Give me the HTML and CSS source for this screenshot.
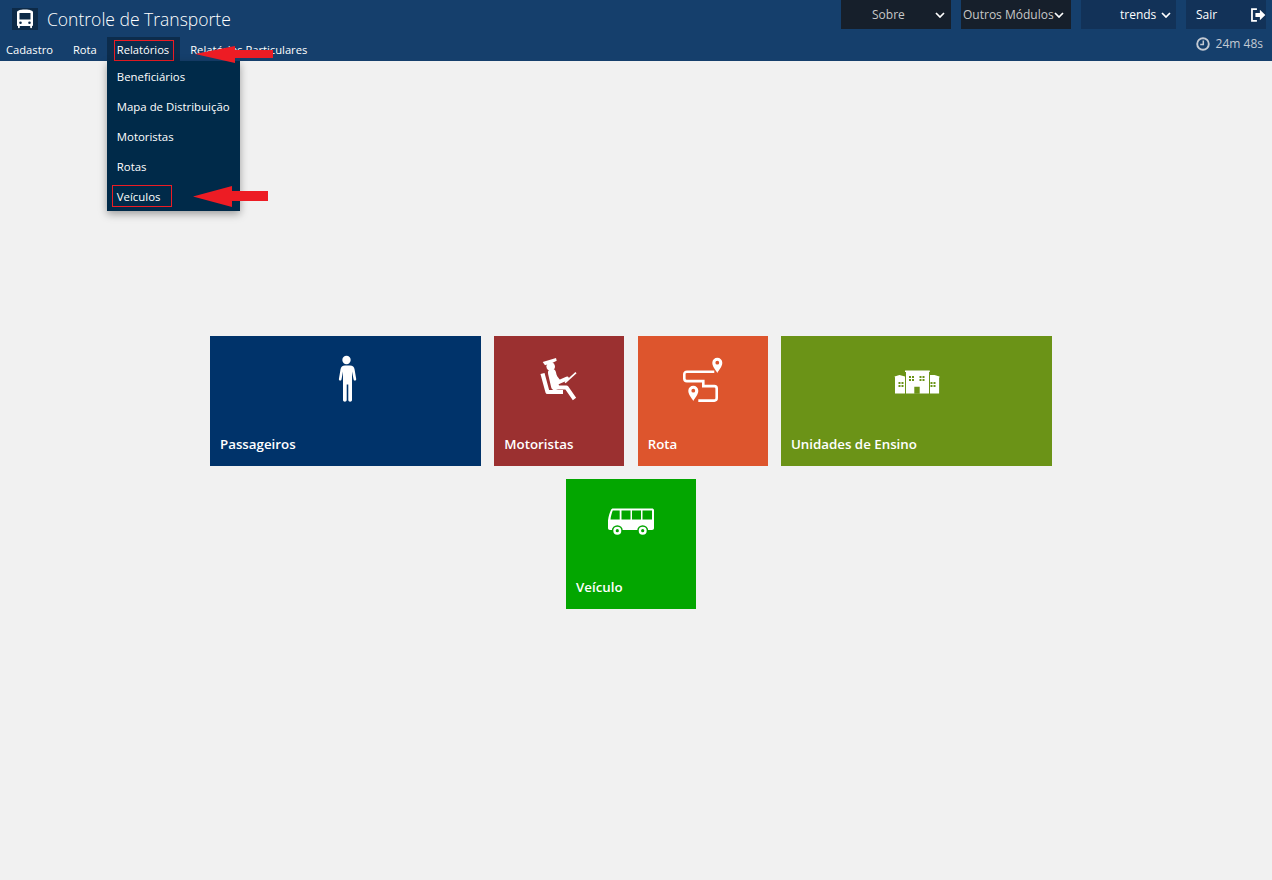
FILE: index.html
```html
<!DOCTYPE html>
<html lang="pt-BR">
<head>
<meta charset="utf-8">
<title>Controle de Transporte</title>
<link rel="stylesheet" href="styles.css">
</head>
<body>
<header class="header">
  <div class="top">
    <div class="brand">
      <span class="logo">
        <svg width="26" height="22" viewBox="0 0 26 22"><path fill="#fff" d="M7 2.500C7 2 10 1.500 13 1.500S19 2 19 2.500c1.500.3 2 1 2 2V17c0 .6-.4 1-1 1v1.500c0 1-1.800 1-1.800 0V18H7.800v1.500c0 1-1.800 1-1.800 0V18c-.6 0-1-.4-1-1V4.500c0-1 .5-1.700 2-2zM7.500 5v6.500h11V5zM8.500 13.500a1.300 1.300 0 1 0 0 2.600 1.300 1.300 0 0 0 0-2.600zm9 0a1.300 1.300 0 1 0 0 2.600 1.300 1.300 0 0 0 0-2.600z" fill-rule="evenodd"/></svg>
      </span>
      <span class="title">Controle de Transporte</span>
    </div>
    <div class="actions">
      <div class="pill pill-dark pill-sobre"><span>Sobre</span><svg class="chev" viewBox="0 0 10 6"><path d="M1 1l4 4 4-4"/></svg></div>
      <div class="pill pill-dark pill-mod"><span>Outros Módulos</span><svg class="chev" viewBox="0 0 10 6"><path d="M1 1l4 4 4-4"/></svg></div>
      <div class="pill pill-navy pill-user"><span>trends</span><svg class="chev" viewBox="0 0 10 6"><path d="M1 1l4 4 4-4"/></svg></div>
      <div class="pill pill-navy pill-exit"><span>Sair</span>
        <svg class="exit" width="16" height="16" viewBox="0 0 16 16"><path d="M7 2H2v12h5" fill="none" stroke="#fff" stroke-width="1.800"/><path fill="#fff" d="M5.500 6h4.500V2.800L15.500 8 10 13.200V10H5.500z"/></svg>
      </div>
    </div>
  </div>
  <div class="bottom">
    <nav class="menu">
      <a class="menu-item first">Cadastro</a>
      <a class="menu-item">Rota</a>
      <div class="menu-item active">
        <span class="mark mark-top"></span>Relatórios
        <div class="dropdown">
          <a>Beneficiários</a>
          <a>Mapa de Distribuição</a>
          <a>Motoristas</a>
          <a>Rotas</a>
          <a class="last"><span class="mark mark-last"></span>Veículos</a>
          <svg class="arrow arrow-bottom" width="76" height="22" viewBox="0 0 76 22"><path fill="#ed1c24" d="M0 10.500L39 0v5h36v10H39v6z"/></svg>
        </div>
        <svg class="arrow arrow-top" width="79" height="20" viewBox="0 0 79 20"><path fill="#ed1c24" d="M0 9L40 1v4h38v8H40v5z"/></svg>
      </div>
      <a class="menu-item">Relatórios Particulares</a>
    </nav>
    <div class="session">
      <svg width="14" height="14" viewBox="0 0 14 14"><circle cx="7" cy="7" r="5.800" fill="none" stroke="#c3cad3" stroke-width="1.900"/><path d="M7.300 3.500v4H4.200" fill="none" stroke="#c3cad3" stroke-width="1.500"/></svg>
      <span>24m 48s</span>
    </div>
  </div>
</header>

<main class="tiles">
  <a class="tile wide navy">
    <svg class="icon" viewBox="0 0 48 48"><circle cx="24.500" cy="5" r="4.200" fill="#fff"/><path fill="#fff" d="M20 10.500h9c2.700 0 4.200 1.500 4.600 4l1.600 9.500c.2 1.800-2.200 2.200-2.600.4L31 16.500V45c0 2.300-3.700 2.300-3.700 0V29.500h-1.600V45c0 2.300-3.700 2.300-3.700 0V16.500l-1.500 7.900c-.4 1.800-2.800 1.400-2.600-.4l1.600-9.500c.4-2.500 1.900-4 4.500-4z" transform="translate(-1 0)"/></svg>
    <span class="label">Passageiros</span>
  </a>
  <a class="tile red">
    <svg class="icon" viewBox="0 0 48 48"><path fill="#fff" d="M7.700 7L21 3l.7 2.700-4 2-7.700 2.600z"/><circle cx="15.700" cy="11.500" r="4.300" fill="#fff"/><path d="M17 18l3 13" stroke="#fff" stroke-width="8" stroke-linecap="round" fill="none"/><path d="M18 19l6 8 8-3.500" stroke="#fff" stroke-width="4" stroke-linejoin="round" stroke-linecap="round" fill="none"/><path d="M7.500 18.500l5 18.500H28" stroke="#fff" stroke-width="4.200" stroke-linejoin="round" fill="none"/><path d="M20 32.500h11.500l8 11.500" stroke="#fff" stroke-width="4" stroke-linejoin="round" fill="none"/><path d="M30 27.700l11-10" stroke="#fff" stroke-width="1.700" fill="none"/></svg>
    <span class="label">Motoristas</span>
  </a>
  <a class="tile orange">
    <svg class="icon" viewBox="0 0 48 48"><path fill="#fff" fill-rule="evenodd" d="M38.300 18c-1.500-3.300-5-6.200-5-10.300a5 5 0 0 1 10 0c0 4.100-3.500 7-5 10.300zm0-12.200a1.900 1.900 0 1 0 0 3.800 1.900 1.900 0 0 0 0-3.800zM14.300 46c-1.500-3.300-5-6.200-5-10.300a5 5 0 0 1 10 0c0 4.100-3.500 7-5 10.300zm0-12.200a1.900 1.900 0 1 0 0 3.800 1.900 1.900 0 0 0 0-3.800z"/><path d="M35.300 16.700H8c-1.600 0-2.700 1-2.700 2.500v4.300c0 1.600 1.100 2.600 2.700 2.600h16.300v5h11c1.600 0 2.400 1 2.400 2.400v9.600c0 1.600-.8 2.500-2.400 2.500h-16" fill="none" stroke="#fff" stroke-width="2.600"/></svg>
    <span class="label">Rota</span>
  </a>
  <a class="tile wide olive">
    <svg class="icon" viewBox="0 0 48 48"><g transform="translate(1 0)"><path fill="#fff" d="M12 15.500h24.800v1.500H36v21.500H13V17h-1zM1.500 21.500l5-1.500 5.500 1.500v17H2V22.500zM37 20l4.500 0 5 1.500v1h-.4v16H37z"/><g fill="#6b9317"><path d="M21.300 31.700h5.400v7h-5.400zM16 21h2v2h-2zM19 21h2v2h-2zM16 24h2v2h-2zM19 24h2v2h-2zM26.500 21h2v2h-2zM29.500 21h2v2h-2zM26.500 24h2v2h-2zM29.500 24h2v2h-2zM5.500 27h2v2h-2zM8.500 27h2v2h-2zM5.500 30h2v2h-2zM8.500 30h2v2h-2zM37.500 27h2v2h-2zM40.500 27h2v2h-2zM37.500 30h2v2h-2zM40.500 30h2v2h-2z"/></g></g></svg>
    <span class="label">Unidades de Ensino</span>
  </a>
  <a class="tile green">
    <svg class="icon" viewBox="0 0 48 48"><path fill="#fff" d="M6 10.500h39c1.300 0 2 .7 2 2V30c0 1.300-.7 2-2 2H3c-1.300 0-2-.7-2-2v-7.500C1.500 18 3 14 4 12c.4-1 1-1.500 2-1.500z"/><g fill="#03a600"><path d="M5.700 12.500h7v9H3.500c.3-3 1-5.500 2.200-9zM14.500 12.500h9v9h-9zM25 12.500h9v9h-9zM35.500 12.500h9.500v9h-9.500z"/><circle cx="10.300" cy="32.700" r="5.500"/><circle cx="35.700" cy="32.700" r="5.500"/></g><circle cx="10.300" cy="32.700" r="4" fill="#fff"/><circle cx="35.700" cy="32.700" r="4" fill="#fff"/><circle cx="10.300" cy="32.700" r="1.600" fill="#03a600"/><circle cx="35.700" cy="32.700" r="1.600" fill="#03a600"/></svg>
    <span class="label">Veículo</span>
  </a>
</main>
</body>
</html>
```
FILE: styles.css
```css
* { box-sizing: border-box; }
html, body { margin: 0; height: 100%; }
body {
  background: #f1f1f1;
  font-family: "Open Sans", "Noto Sans", "Liberation Sans", sans-serif;
  font-size: 11.5px;
  color: #fff;
  overflow: hidden;
}
.header {
  height: 61px;
  background: #153f6c;
  display: flex;
  flex-direction: column;
  justify-content: space-between;
}
.top {
  display: flex;
  justify-content: space-between;
  padding-right: 6px;
}
.brand {
  display: flex;
  align-items: center;
  padding: 7px 0 0 12px;
  gap: 9px;
}
.logo {
  width: 26px;
  height: 22px;
  background: #0d2a47;
  display: flex;
}
.title {
  font-size: 17.500px;
  font-weight: 300;
  line-height: 24px;
}
.actions { display: flex; gap: 10px; }
.pill {
  height: 29px;
  display: flex;
  align-items: center;
  font-size: 12px;
}
.pill-dark { background: #161f2b; color: #c8c8c8; width: 110px; }
.pill-navy { background: #123258; }
.pill-sobre { padding-left: 31px; justify-content: flex-start; }
.pill-sobre .chev { margin-left: 30px; }
.pill-mod { padding-left: 2px; }
.pill-mod .chev { margin-left: 0; }
.pill-user { width: 95px; padding-left: 39px; }
.pill-user .chev { margin-left: 5px; }
.pill-exit { width: 80px; padding-left: 10px; }
.exit { margin-left: 33px; }
.chev { width: 10px; height: 6px; fill: none; stroke: #fff; stroke-width: 1.700; flex: none; }
.bottom {
  display: flex;
  justify-content: space-between;
  align-items: flex-end;
  height: 24px;
}
.menu { display: flex; height: 24px; font-size: 11.200px; }
.menu-item {
  position: relative;
  display: block;
  padding: 5px 10px 0;
  line-height: 16px;
  white-space: nowrap;
}
.menu-item.first { padding-left: 6px; padding-right: 10px; }
.menu-item.active { background: #0c2c4c; padding-right: 11px; }
.mark {
  position: absolute;
  border: 1px solid #ed1c24;
  pointer-events: none;
}
.mark-top { left: 7px; right: 6px; top: 3px; height: 21px; }
.dropdown {
  position: absolute;
  left: 0;
  top: 24px;
  z-index: 5;
  width: 133px;
  height: 150px;
  background: #002a49;
  box-shadow: 0 3px 8px rgba(0, 0, 0, .35);
  display: flex;
  flex-direction: column;
  font-size: 11.400px;
}
.dropdown a {
  position: relative;
  display: block;
  height: 30px;
  line-height: 31px;
  padding-left: 10px;
}
.mark-last { left: 5px; width: 60px; top: 4px; height: 22px; }
.arrow { position: absolute; z-index: 6; }
.arrow-top { left: 88px; top: 8px; }
.arrow-bottom { left: 86px; top: 125px; }
.session {
  display: flex;
  align-items: center;
  gap: 6px;
  padding: 0 9px 9px 0;
  color: #c3cad3;
  font-size: 12px;
}
.tiles {
  width: 842px;
  margin: 275px 0 0 210px;
  display: flex;
  flex-wrap: wrap;
  justify-content: center;
  gap: 13px 13.330px;
}
.tile {
  position: relative;
  width: 130px;
  height: 130px;
  padding: 19px 10px 0;
  display: flex;
  flex-direction: column;
  align-items: center;
}
.tile.wide { width: 271px; }
.icon { width: 48px; height: 48px; flex: none; }
.label {
  align-self: flex-start;
  margin-top: 31px;
  font-size: 13.300px;
  font-weight: 600;
  line-height: 20px;
}
.navy { background: #00336a; }
.red { background: #9b3030; }
.orange { background: #dd552d; }
.olive { background: #6b9317; }
.green { background: #03a600; }
```
